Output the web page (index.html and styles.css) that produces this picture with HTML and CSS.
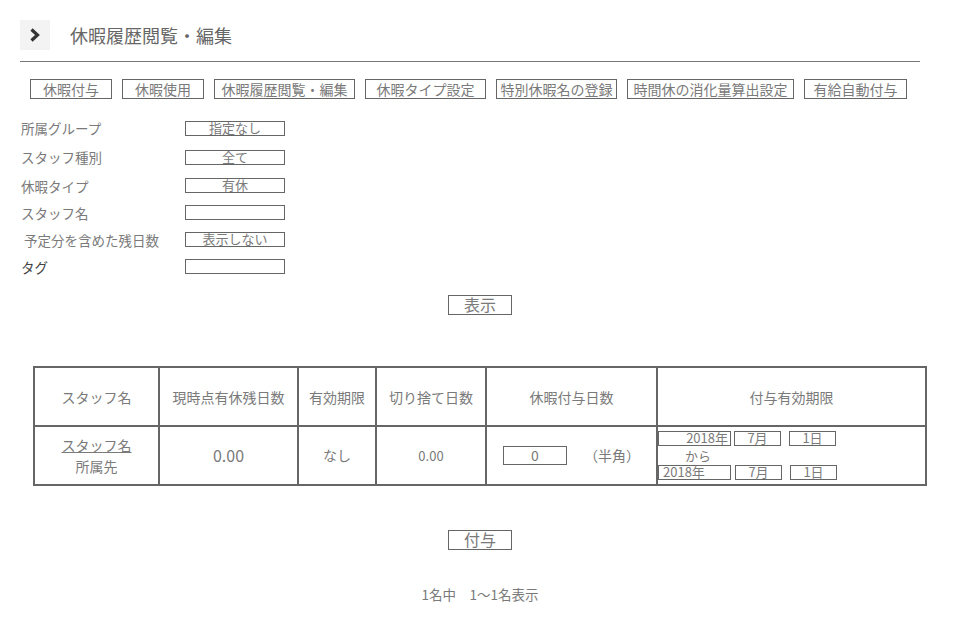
FILE: index.html
```html
<!doctype html>
<html>
<head>
  <meta charset="utf-8">
  <link rel="stylesheet" href="styles.css">
</head>
<body>

  <div class="header">
    <div class="backIcon">
      <svg width="30" height="30" viewBox="0 0 30 30"><path d="M11.5 9.5 L17.5 15 L11.5 20.5" fill="none" stroke="#333" stroke-width="3.2"/></svg>
    </div>
    <h1 class="title">休暇履歴閲覧・編集</h1>
  </div>
  <hr class="rule">

  <div class="tabs">
    <button class="tab">休暇付与</button>
    <button class="tab">休暇使用</button>
    <button class="tab">休暇履歴閲覧・編集</button>
    <button class="tab">休暇タイプ設定</button>
    <button class="tab">特別休暇名の登録</button>
    <button class="tab">時間休の消化量算出設定</button>
    <button class="tab">有給自動付与</button>
  </div>

  <div class="filters">
    <div class="label">所属グループ</div><div class="box">指定なし</div>
    <div class="label">スタッフ種別</div><div class="box">全て</div>
    <div class="label">休暇タイプ</div><div class="box">有休</div>
    <div class="label">スタッフ名</div><div class="box"></div>
    <div class="label indent">予定分を含めた残日数</div><div class="box">表示しない</div>
    <div class="label dark">タグ</div><div class="box"></div>
  </div>

  <div class="center showRow"><button class="action">表示</button></div>

  <table class="list">
    <tr>
      <th class="c1">スタッフ名</th>
      <th class="c2">現時点有休残日数</th>
      <th class="c3">有効期限</th>
      <th class="c4">切り捨て日数</th>
      <th class="c5">休暇付与日数</th>
      <th class="c6">付与有効期限</th>
    </tr>
    <tr>
      <td><a class="staff" href="#">スタッフ名</a><br>所属先</td>
      <td class="big">0.00</td>
      <td>なし</td>
      <td class="small">0.00</td>
      <td>
        <div class="grant">
          <span class="num">0</span>
          <span>（半角）</span>
        </div>
      </td>
      <td class="dates">
        <div class="dateRow">
          <span class="sel year right">2018年</span><span class="sel month">7月</span><span class="sel day">1日</span>
        </div>
        <div class="kara">から</div>
        <div class="dateRow second">
          <span class="sel year">2018年</span><span class="sel month">7月</span><span class="sel day">1日</span>
        </div>
      </td>
    </tr>
  </table>

  <div class="center grantRow"><button class="action">付与</button></div>

  <p class="count">1名中　1〜1名表示</p>

</body>
</html>
```

FILE: styles.css
```css
* {
  box-sizing: border-box;
}
body {
  margin: 0;
  padding: 20px;
  font-family: "Noto Sans CJK JP", "Noto Sans", sans-serif;
  color: #7a7a7a;
  background: #fff;
}
.header {
  display: flex;
  align-items: center;
  height: 30px;
}
.backIcon {
  width: 30px;
  height: 30px;
  background: #f3f3f3;
}
.backIcon svg {
  display: block;
}
.title {
  margin: 0 0 0 20px;
  font-size: 18px;
  font-weight: normal;
  line-height: 30px;
  color: #666;
}
.rule {
  width: 900px;
  height: 0;
  margin: 11px 0 0;
  border: 0;
  border-top: 1px solid #777;
}

/* tab buttons */
.tabs {
  display: flex;
  gap: 10px;
  margin-top: 17px;
  padding-left: 10px;
}
.tab {
  height: 20px;
  padding: 0;
  border: 1px solid #666;
  background: #fff;
  color: #7a7a7a;
  font-family: inherit;
  font-size: 14px;
  line-height: 18px;
}
.tab:nth-child(1) { width: 82px; }
.tab:nth-child(2) { width: 82px; }
.tab:nth-child(3) { width: 141px; }
.tab:nth-child(4) { width: 121px; }
.tab:nth-child(5) { width: 121px; }
.tab:nth-child(6) { width: 167px; }
.tab:nth-child(7) { width: 103px; }

/* search form */
.filters {
  display: grid;
  grid-template-columns: 164px 100px;
  grid-template-rows: 28px 30px 27px 27px 27px 27px;
  align-items: center;
  margin-top: 15px;
  padding-left: 1px;
}
.label {
  font-size: 13.5px;
  line-height: 20px;
}
.label.indent {
  padding-left: 3px;
}
.label.dark {
  color: #444;
}
.box {
  width: 100px;
  height: 15px;
  border: 1px solid #666;
  font-size: 13px;
  line-height: 12px;
  text-align: center;
}

.center {
  text-align: center;
}
.showRow {
  margin-top: 12px;
}
.action {
  width: 64px;
  height: 20px;
  padding: 0;
  border: 1px solid #666;
  background: #fff;
  color: #7a7a7a;
  font-family: inherit;
  font-size: 16px;
  line-height: 17px;
}

/* result table */
.list {
  width: 894px;
  margin: 50px 0 0 13px;
  border: 1px solid #666;
  border-spacing: 0;
  table-layout: fixed;
}
.list th, .list td {
  border: 1px solid #666;
  padding: 0;
  text-align: center;
  vertical-align: middle;
  font-weight: normal;
  font-size: 14px;
  color: #7a7a7a;
}
.list th {
  height: 59px;
}
.list td {
  height: 59px;
  line-height: 21px;
}
.c1 { width: 125px; }
.c2 { width: 139px; }
.c3 { width: 78px; }
.c4 { width: 110px; }
.c5 { width: 171px; }
.c6 { width: 269px; }
.staff {
  color: #7a7a7a;
}
.list td.big {
  font-size: 16px;
}
.list td.small {
  font-size: 13px;
}
.grant {
  display: flex;
  justify-content: center;
  align-items: center;
  gap: 17px;
}
.num {
  width: 64px;
  height: 19px;
  border: 1px solid #666;
  font-size: 14px;
  line-height: 17px;
}
.list td.dates {
  text-align: left;
  line-height: 14px;
}
.dateRow {
  display: flex;
  height: 15px;
}
.sel {
  height: 15px;
  border: 1px solid #666;
  font-size: 13px;
  line-height: 12px;
  text-align: center;
}
.year {
  width: 73px;
  padding-left: 4px;
  text-align: left;
}
.year.right {
  padding: 0 2px 0 0;
  text-align: right;
}
.month {
  width: 47px;
  margin-left: 3px;
}
.day {
  width: 47px;
  margin-left: 8px;
}
.second .month {
  margin-left: 4px;
}
.kara {
  height: 19px;
  padding-left: 27px;
  font-size: 13px;
  line-height: 19px;
}

.grantRow {
  margin-top: 41px;
}
.count {
  margin: 33px 0 0;
  text-align: center;
  font-size: 13.5px;
  line-height: 20px;
}
```
